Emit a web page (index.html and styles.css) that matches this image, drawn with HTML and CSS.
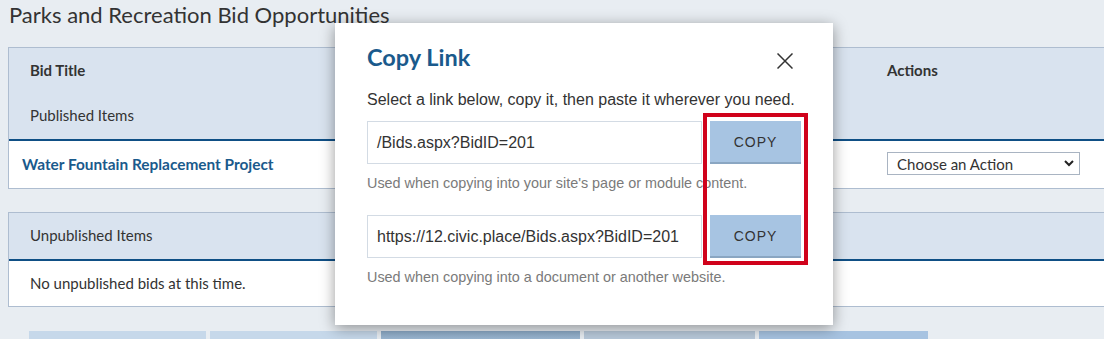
FILE: index.html
```html
<!DOCTYPE html>
<html lang="en">
<head>
  <meta charset="UTF-8" />
  <title>Parks and Recreation Bid Opportunities</title>
  <link rel="stylesheet" href="styles.css">
</head>
<body>
  <div class="page">
    <h1 class="page-title">Parks and Recreation Bid Opportunities</h1>

    <div class="bid-table">
      <div class="bid-head">
        <div class="col-title">Bid Title</div>
        <div class="col-actions">Actions</div>
        <div class="group-label">Published Items</div>
      </div>
      <div class="bid-row">
        <a class="bid-link" href="#">Water Fountain Replacement Project</a>
        <div class="col-actions">
          <div class="action-select">
            <span>Choose an Action</span>
            <svg width="10" height="7" viewBox="0 0 10 7"><path d="M1 1l4 4 4-4" fill="none" stroke="#222" stroke-width="2"/></svg>
          </div>
        </div>
      </div>
    </div>

    <div class="bid-table second">
      <div class="bid-head single">
        <div class="group-label">Unpublished Items</div>
      </div>
      <div class="bid-row empty">No unpublished bids at this time.</div>
    </div>

    <div class="tabs">
      <div class="tab t1"></div>
      <div class="tab t2"></div>
      <div class="tab t3"></div>
      <div class="tab t4"></div>
      <div class="tab t5"></div>
    </div>
  </div>

  <div class="modal">
    <div class="modal-header">
      <h2>Copy Link</h2>
      <button class="close-btn" aria-label="Close">
        <svg width="16" height="16" viewBox="0 0 16 16"><path d="M0.5 0.5l15 15M15.5 0.5l-15 15" stroke="#333" stroke-width="1.5"/></svg>
      </button>
    </div>
    <p class="intro">Select a link below, copy it, then paste it wherever you need.</p>

    <div class="link-row">
      <div class="link-input">/Bids.aspx?BidID=201</div>
      <button class="copy-btn">COPY</button>
    </div>
    <p class="hint">Used when copying into your site's page or module content.</p>

    <div class="link-row second">
      <div class="link-input">https://12.civic.place/Bids.aspx?BidID=201</div>
      <button class="copy-btn">COPY</button>
    </div>
    <p class="hint">Used when copying into a document or another website.</p>

    <div class="highlight"></div>
  </div>
</body>
</html>
```

FILE: styles.css
```css
body {
  margin: 0;
  background-color: #e8edf2;
  font-family: Lato, "Open Sans", sans-serif;
  color: #333;
  overflow: hidden;
}
.page {
  width: 1130px;
  padding-left: 8px;
}
.page-title {
  margin: 0;
  padding-left: 1px;
  font-size: 22px;
  font-weight: 400;
  line-height: 30px;
  color: #333;
}
.bid-table {
  margin-top: 17px;
  border: 1px solid #aebdd0;
  border-right: none;
}
.bid-table.second {
  margin-top: 23px;
}
.bid-head {
  display: grid;
  grid-template-columns: 878px 1fr;
  background-color: #d9e3ef;
  border-bottom: 2px solid #0f4f85;
  font-size: 15px;
}
.bid-head.single {
  display: block;
}
.col-title,
.bid-head > .col-actions {
  height: 45px;
  line-height: 44px;
  font-weight: 700;
}
.col-title {
  padding-left: 21px;
}
.group-label {
  grid-column: 1 / -1;
  height: 46px;
  line-height: 45px;
  padding-left: 21px;
}
.bid-row {
  display: grid;
  grid-template-columns: 878px 1fr;
  align-items: center;
  height: 47px;
  background-color: #fff;
  font-size: 15px;
}
.bid-row.empty {
  display: block;
  height: 45px;
  line-height: 44px;
  padding-left: 21px;
}
.bid-link {
  padding-left: 13px;
  margin-top: -2px;
  color: #1a5a8c;
  font-size: 15.4px;
  font-weight: 700;
  text-decoration: none;
}
.action-select {
  display: flex;
  justify-content: space-between;
  align-items: center;
  width: 193px;
  height: 23px;
  box-sizing: border-box;
  margin-top: -2px;
  padding: 0 5px 0 9px;
  border: 1px solid #a9b4c2;
  background-color: #fff;
  font-size: 15px;
}
.tabs {
  display: flex;
  gap: 4px;
  margin-top: 24px;
  padding-left: 21px;
}
.tab {
  height: 8px;
}
.t1 { width: 177px; background-color: #c6d8ea; }
.t2 { width: 167px; background-color: #c6d8ea; }
.t3 { width: 199px; background: linear-gradient(#8caac7, #9bb6d1); }
.t4 { width: 171px; background-color: #b8c9da; }
.t5 { width: 169px; background-color: #a7c3e1; }

.modal {
  position: absolute;
  left: 335px;
  top: 23px;
  width: 498px;
  box-sizing: border-box;
  padding: 19px 32px 38px;
  background-color: #fff;
  box-shadow: 0 3px 14px rgba(0, 0, 0, 0.4);
  font-family: "Liberation Sans", Arial, sans-serif;
}
.modal-header {
  display: flex;
  justify-content: space-between;
  align-items: flex-start;
  height: 30px;
}
.modal-header h2 {
  margin: 0;
  font-family: Lato, "Open Sans", sans-serif;
  font-size: 23.5px;
  font-weight: 700;
  line-height: 30px;
  color: #1a5a8c;
}
.close-btn {
  margin: 11px 8px 0 0;
  padding: 0;
  border: none;
  background: none;
  line-height: 0;
}
.intro {
  margin: 18px 0 0;
  font-size: 16px;
  line-height: 20px;
  color: #333;
}
.link-row {
  display: flex;
  gap: 8px;
  margin-top: 11px;
  height: 43px;
}
.link-row.second {
  margin-top: 22px;
}
.link-input {
  width: 335px;
  box-sizing: border-box;
  padding-left: 9px;
  border: 1px solid #d3dbe4;
  font-size: 16px;
  line-height: 41px;
  color: #333;
}
.copy-btn {
  width: 91px;
  border: none;
  border-bottom: 2px solid #8aa6c2;
  background-color: #a7c4e2;
  font-family: "Liberation Sans", Arial, sans-serif;
  font-size: 14px;
  letter-spacing: 1px;
  color: #333;
}
.hint {
  margin: 9px 0 0;
  font-size: 14.4px;
  line-height: 20px;
  color: #7a7a7a;
}
.highlight {
  position: absolute;
  left: 368px;
  top: 90px;
  width: 105px;
  height: 152px;
  box-sizing: border-box;
  border: 4px solid #d0021b;
}
```
